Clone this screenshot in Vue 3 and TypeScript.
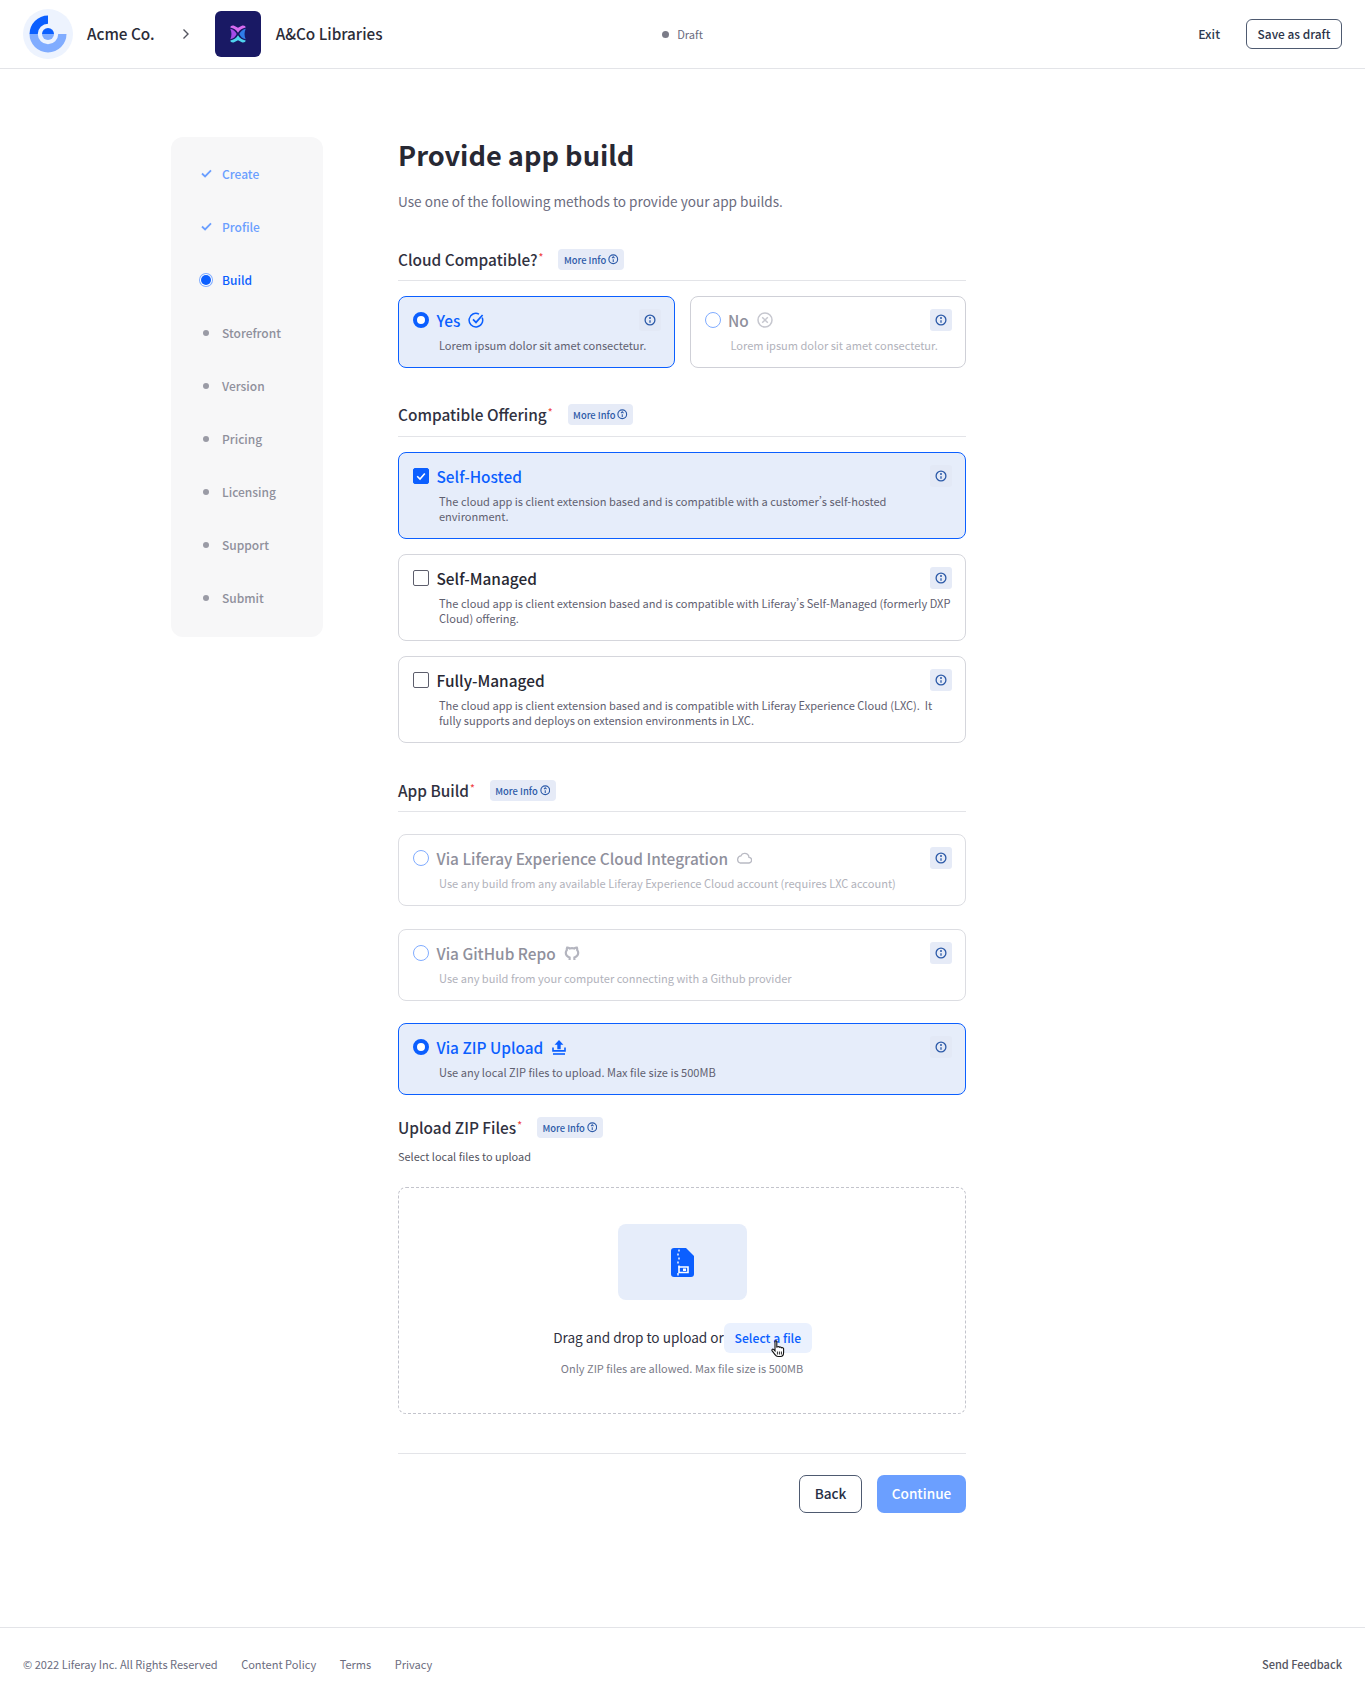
<script setup lang="ts">
interface Step { label: string; state: 'done' | 'current' | 'todo' }
const steps: Step[] = [
  { label: 'Create', state: 'done' },
  { label: 'Profile', state: 'done' },
  { label: 'Build', state: 'current' },
  { label: 'Storefront', state: 'todo' },
  { label: 'Version', state: 'todo' },
  { label: 'Pricing', state: 'todo' },
  { label: 'Licensing', state: 'todo' },
  { label: 'Support', state: 'todo' },
  { label: 'Submit', state: 'todo' },
]
const offerings = [
  { title: 'Self-Hosted', desc: 'The cloud app is client extension based and is compatible with a customer’s self-hosted environment.', on: true },
  { title: 'Self-Managed', desc: 'The cloud app is client extension based and is compatible with Liferay’s Self-Managed (formerly DXP Cloud) offering.', on: false },
  { title: 'Fully-Managed', desc: 'The cloud app is client extension based and is compatible with Liferay Experience Cloud (LXC). \u00a0It fully supports and deploys on extension environments in LXC.', on: false },
]
</script>

<template>
  <div class="page">
    <header class="topbar">
      <div class="crumbs">
        <svg class="logo" viewBox="0 0 50 50" width="50" height="50">
          <circle cx="25" cy="25" r="25" fill="#edf3fe" />
          <path d="M6.5 25A18.5 18.5 0 0 0 43.5 25L35.2 25A10.2 10.2 0 0 1 14.8 25Z" fill="#80acff" />
          <path d="M6.5 25A18.5 18.5 0 0 1 25 6.5L25 14.8A10.2 10.2 0 0 0 14.8 25Z" fill="#0b5fff" />
          <path d="M19 25A6 6 0 0 1 31 25Z" fill="#0b5fff" />
          <path d="M19 25A6 6 0 0 0 31 25Z" fill="#80acff" />
        </svg>
        <span class="crumb-name acme">Acme Co.</span>
        <svg class="chev" viewBox="0 0 8 12" width="8" height="12"><path d="M1.5 1.5 6 6l-4.5 4.5" fill="none" stroke="#54555f" stroke-width="1.4" /></svg>
        <span class="app-icon">
          <svg viewBox="0 0 20 20" width="22" height="22">
            <path d="M3 4C3 2.600 4.800 1.800 6.500 2.400L10 4.400l3.500-2C15.200 1.800 17 2.600 17 4 14 4.600 11.500 6.200 10 8.800 8.500 6.200 6 4.600 3 4Z" fill="#d76bf0" />
            <path d="M3 5.200C5.800 5.800 7.800 7.600 8.800 10 7.800 12.400 5.800 14.200 3 14.800 4.400 11.600 4.400 8.400 3 5.200Z" fill="#a54be8" />
            <path d="M17 5.200C14.200 5.800 12.200 7.600 11.200 10c1 2.400 3 4.200 5.800 4.800C15.600 11.600 15.600 8.400 17 5.200Z" fill="#2f7de8" />
            <path d="M3 16C6 15.400 8.500 13.800 10 11.200c1.500 2.600 4 4.200 7 4.800 0 1.400-1.800 2.200-3.500 1.600L10 15.600l-3.500 2C4.800 18.200 3 17.400 3 16Z" fill="#4fd3ee" />
          </svg>
        </span>
        <span class="crumb-name">A&amp;Co Libraries</span>
      </div>
      <div class="status"><i class="status-dot"></i>Draft</div>
      <div class="actions">
        <span class="exit">Exit</span>
        <button class="btn-draft">Save as draft</button>
      </div>
    </header>

    <div class="body">
      <nav class="steps">
        <div v-for="s in steps" :key="s.label" class="step" :class="s.state">
          <span class="step-mark">
            <svg v-if="s.state === 'done'" viewBox="0 0 12 10" width="11" height="9"><path d="M1 5l3.400 3.200L11 1.400" fill="none" stroke="currentColor" stroke-width="2" /></svg>
            <i v-else-if="s.state === 'current'" class="mark-current"></i>
            <i v-else class="mark-todo"></i>
          </span>
          <span>{{ s.label }}</span>
        </div>
      </nav>

      <main class="content">
        <h1 class="title">Provide app build</h1>
        <p class="lead">Use one of the following methods to provide your app builds.</p>

        <section class="sec sec-first">
          <div class="sec-head ruled">
            <h2>Cloud Compatible?<sup>*</sup></h2>
            <span class="more">More Info<svg viewBox="0 0 12 12" width="10.500" height="10.500"><circle cx="6" cy="6" r="5" fill="none" stroke="currentColor" stroke-width="1.300" /><path d="M6 9V6M4.600 4.800 6 3.300l1.400 1.500" fill="none" stroke="currentColor" stroke-width="1.200" /></svg></span>
          </div>
          <div class="two">
            <div class="card on short">
              <div class="card-top">
                <i class="radio checked"></i>
                <span class="card-title">Yes</span>
                <svg class="t-icon" viewBox="0 0 16 16" width="16" height="16"><path d="M14.200 5.600A6.800 6.800 0 1 1 11 2.100" fill="none" stroke="#0b5fff" stroke-width="1.500" /><path d="M5 7.400 8 10.400 14.600 3" fill="none" stroke="#0b5fff" stroke-width="1.700" /></svg>
                <span class="info"><svg viewBox="0 0 12 12" width="12" height="12"><circle cx="6" cy="6" r="4.900" fill="none" stroke="currentColor" stroke-width="1.300" /><path d="M6 8.800V6.200" stroke="currentColor" stroke-width="1.300" /><circle cx="6" cy="4" r="1" fill="currentColor" /></svg></span>
              </div>
              <p class="card-desc">Lorem ipsum dolor sit amet consectetur.</p>
            </div>
            <div class="card off dim short">
              <div class="card-top">
                <i class="radio"></i>
                <span class="card-title">No</span>
                <svg class="t-icon" viewBox="0 0 16 16" width="16" height="16"><circle cx="8" cy="8" r="7" fill="none" stroke="#c6c7cf" stroke-width="1.500" /><path d="M5.200 5.200l5.600 5.600M10.800 5.200l-5.600 5.600" stroke="#c6c7cf" stroke-width="1.500" /></svg>
                <span class="info"><svg viewBox="0 0 12 12" width="12" height="12"><circle cx="6" cy="6" r="4.900" fill="none" stroke="currentColor" stroke-width="1.300" /><path d="M6 8.800V6.200" stroke="currentColor" stroke-width="1.300" /><circle cx="6" cy="4" r="1" fill="currentColor" /></svg></span>
              </div>
              <p class="card-desc">Lorem ipsum dolor sit amet consectetur.</p>
            </div>
          </div>
        </section>

        <section class="sec sec-offering">
          <div class="sec-head ruled">
            <h2>Compatible Offering<sup>*</sup></h2>
            <span class="more">More Info<svg viewBox="0 0 12 12" width="10.500" height="10.500"><circle cx="6" cy="6" r="5" fill="none" stroke="currentColor" stroke-width="1.300" /><path d="M6 9V6M4.600 4.800 6 3.300l1.400 1.500" fill="none" stroke="currentColor" stroke-width="1.200" /></svg></span>
          </div>
          <div class="stack">
            <div v-for="o in offerings" :key="o.title" class="card tall" :class="o.on ? 'on' : 'plain'">
              <div class="card-top">
                <i class="check" :class="{ checked: o.on }">
                  <svg v-if="o.on" viewBox="0 0 12 12" width="12" height="12"><path d="M2.200 6.200 5 9l4.800-5.600" fill="none" stroke="#fff" stroke-width="1.600" /></svg>
                </i>
                <span class="card-title">{{ o.title }}</span>
                <span class="info"><svg viewBox="0 0 12 12" width="12" height="12"><circle cx="6" cy="6" r="4.900" fill="none" stroke="currentColor" stroke-width="1.300" /><path d="M6 8.800V6.200" stroke="currentColor" stroke-width="1.300" /><circle cx="6" cy="4" r="1" fill="currentColor" /></svg></span>
              </div>
              <p class="card-desc">{{ o.desc }}</p>
            </div>
          </div>
        </section>

        <section class="sec sec-build">
          <div class="sec-head ruled">
            <h2>App Build<sup>*</sup></h2>
            <span class="more">More Info<svg viewBox="0 0 12 12" width="10.500" height="10.500"><circle cx="6" cy="6" r="5" fill="none" stroke="currentColor" stroke-width="1.300" /><path d="M6 9V6M4.600 4.800 6 3.300l1.400 1.500" fill="none" stroke="currentColor" stroke-width="1.200" /></svg></span>
          </div>
          <div class="stack builds">
            <div class="card off short">
              <div class="card-top">
                <i class="radio"></i>
                <span class="card-title">Via Liferay Experience Cloud Integration</span>
                <svg class="t-icon" viewBox="0 0 16 12" width="16" height="12"><path d="M4.200 11H12.600A2.800 2.800 0 0 0 13 5.400 4.200 4.200 0 0 0 8.200 1.400 4 4 0 0 0 5 3.800 3.700 3.700 0 0 0 4.200 11Z" fill="none" stroke="#b9bac3" stroke-width="1.300" /></svg>
                <span class="info"><svg viewBox="0 0 12 12" width="12" height="12"><circle cx="6" cy="6" r="4.900" fill="none" stroke="currentColor" stroke-width="1.300" /><path d="M6 8.800V6.200" stroke="currentColor" stroke-width="1.300" /><circle cx="6" cy="4" r="1" fill="currentColor" /></svg></span>
              </div>
              <p class="card-desc">Use any build from any available Liferay Experience Cloud account (requires LXC account)</p>
            </div>
            <div class="card off short">
              <div class="card-top">
                <i class="radio"></i>
                <span class="card-title">Via GitHub Repo</span>
                <svg class="t-icon" viewBox="0 0 16 16" width="16" height="16"><path d="M5.600 15v-2.400C4 12 1.800 10.800 1.800 7.800c0-1.100.4-2 1-2.700-.1-.9 0-1.700.4-2.600.9 0 1.800.4 2.600 1a7.500 7.500 0 0 1 4.400 0c.8-.6 1.700-1 2.600-1 .4.900.5 1.700.4 2.600.6.700 1 1.600 1 2.700 0 3-2.200 4.200-3.800 4.800V15" fill="none" stroke="#b4b5bf" stroke-width="2.200" /></svg>
                <span class="info"><svg viewBox="0 0 12 12" width="12" height="12"><circle cx="6" cy="6" r="4.900" fill="none" stroke="currentColor" stroke-width="1.300" /><path d="M6 8.800V6.200" stroke="currentColor" stroke-width="1.300" /><circle cx="6" cy="4" r="1" fill="currentColor" /></svg></span>
              </div>
              <p class="card-desc">Use any build from your computer connecting with a Github provider</p>
            </div>
            <div class="card on short">
              <div class="card-top">
                <i class="radio checked"></i>
                <span class="card-title">Via ZIP Upload</span>
                <svg class="t-icon up" viewBox="0 0 14 16" width="14" height="16"><path d="M7 1 11.400 5.800H8.700V10.200H5.300V5.800H2.600Z" fill="#0b5fff" /><path d="M1 8.500v3.400h12V8.500" fill="none" stroke="#0b5fff" stroke-width="1.600" /><path d="M1 15h12" stroke="#0b5fff" stroke-width="1.600" /></svg>
                <span class="info"><svg viewBox="0 0 12 12" width="12" height="12"><circle cx="6" cy="6" r="4.900" fill="none" stroke="currentColor" stroke-width="1.300" /><path d="M6 8.800V6.200" stroke="currentColor" stroke-width="1.300" /><circle cx="6" cy="4" r="1" fill="currentColor" /></svg></span>
              </div>
              <p class="card-desc">Use any local ZIP files to upload. Max file size is 500MB</p>
            </div>
          </div>
        </section>

        <section class="sec sec-upload">
          <div class="sec-head">
            <h2>Upload ZIP Files<sup>*</sup></h2>
            <span class="more">More Info<svg viewBox="0 0 12 12" width="10.500" height="10.500"><circle cx="6" cy="6" r="5" fill="none" stroke="currentColor" stroke-width="1.300" /><path d="M6 9V6M4.600 4.800 6 3.300l1.400 1.500" fill="none" stroke="currentColor" stroke-width="1.200" /></svg></span>
          </div>
          <p class="upload-hint">Select local files to upload</p>
          <div class="drop">
            <div class="drop-icon">
              <svg viewBox="0 0 23 29" width="23" height="29">
                <path d="M3 0H15L23 8V26A3 3 0 0 1 20 29H3A3 3 0 0 1 0 26V3A3 3 0 0 1 3 0Z" fill="#0b5fff" />
                <path d="M8 1.500V3.500M7 5.500V7.500M8 9.500V11.500M7 13.500V15.500M8 17.500V19.500M7 25V27.500" stroke="#fff" stroke-width="1.400" />
                <path d="M8 19H17V24.500H8Z" fill="none" stroke="#fff" stroke-width="1.600" />
                <rect x="12" y="20.500" width="3" height="2.500" fill="#fff" />
              </svg>
            </div>
            <div class="drop-line">
              <span class="drop-text">Drag and drop to upload or</span>
              <span class="select-file">Select a file
                <svg class="cursor" viewBox="0 0 16 18" width="16" height="18">
                  <path d="M5 1.500C5 .6 6.800 .6 6.800 1.500V7L8 6.700C9 6.500 9.400 6.700 9.600 7.300 10.400 6.900 11.200 7 11.400 7.800 12.200 7.400 13.400 7.600 13.600 8.600V12.500C13.600 14.600 12.400 16.500 10.400 16.500H8C6.600 16.500 5.800 15.800 5 14.600L2 10.600C1.400 9.600 2.600 8.600 3.600 9.400L5 10.800Z" fill="#fff" stroke="#111" stroke-width="1.100" />
                  <path d="M7.400 11.500V14.500M9.400 11.500V14.500M11.400 11.500V14.500" stroke="#111" stroke-width=".9" />
                </svg>
              </span>
            </div>
            <p class="drop-note">Only ZIP files are allowed. Max file size is 500MB</p>
          </div>
        </section>

        <div class="form-actions">
          <button class="btn-back">Back</button>
          <button class="btn-continue">Continue</button>
        </div>
      </main>
    </div>

    <footer class="footer">
      <div class="foot-left">
        <span>© 2022 Liferay Inc. All Rights Reserved</span>
        <span>Content Policy</span>
        <span>Terms</span>
        <span>Privacy</span>
      </div>
      <span class="foot-right">Send Feedback</span>
    </footer>
  </div>
</template>

<style>
html, body { margin: 0; background: #fff; }
</style>

<style scoped>
.page {
  height: 1702px;
  display: flex;
  flex-direction: column;
  font-family: "Noto Sans CJK SC", "Noto Sans", sans-serif;
  font-variant-east-asian: proportional-width;
  color: #272833;
  overflow: hidden;
}
p, h1, h2 { margin: 0; font-weight: inherit; }
i { display: block; font-style: normal; }
button { font-family: inherit; font-variant-east-asian: inherit; cursor: pointer; }

.topbar {
  height: 68px;
  border-bottom: 1px solid #e3e4e8;
  padding: 0 23px;
  display: grid;
  grid-template-columns: 1fr auto 1fr;
  align-items: center;
  flex: none;
}
.crumbs { display: flex; align-items: center; }
.crumb-name { font-size: 15.300px; font-weight: 500; line-height: 24px; padding-bottom: 2px; color: #2b2c38; }
.acme { margin-left: 14px; }
.chev { margin: 0 25px 0 27px; }
.app-icon {
  width: 46px; height: 46px;
  border-radius: 6px;
  background: #191964;
  display: flex; align-items: center; justify-content: center;
  margin-right: 15px;
}
.status { display: flex; align-items: center; gap: 8px; font-size: 11.100px; line-height: 18px; color: #6b6c7e; }
.status-dot { width: 7px; height: 7px; border-radius: 50%; background: #7b7c88; }
.actions { display: flex; align-items: center; justify-content: flex-end; gap: 26px; }
.exit { font-size: 12.300px; line-height: 18px; font-weight: 500; color: #2e3a52; }
.btn-draft {
  width: 96px; height: 30px;
  border: 1.500px solid #4e5a70;
  border-radius: 6px;
  background: #fff;
  padding: 0 0 2px;
  font-size: 11.900px;
  font-weight: 500;
  color: #2b3348;
}

.body { display: flex; flex: none; padding-left: 171px; }
.steps {
  width: 152px;
  height: 500px;
  box-sizing: border-box;
  margin-top: 68px;
  padding: 10px 0 13px;
  border-radius: 12px;
  background: #f7f7f8;
}
.step {
  height: 53px;
  padding-left: 27px;
  display: flex;
  align-items: center;
  font-size: 12px;
  font-weight: 500;
  color: #8f909c;
}
.step.done { color: #6b9fff; }
.step.current { color: #0b5fff; }
.step-mark { width: 16px; margin-right: 8px; display: flex; align-items: center; justify-content: center; }
.mark-todo { width: 6px; height: 6px; border-radius: 50%; background: #9a9ba5; }
.mark-current {
  width: 10px; height: 10px; border-radius: 50%;
  background: #0b5fff;
  box-shadow: 0 0 0 1px #fff, 0 0 0 2px #80acff;
}

.content { width: 568px; margin-left: 75px; padding-top: 66px; }
.title { font-size: 27.200px; line-height: 38px; font-weight: 700; color: #272833; }
.lead { margin-top: 16px; font-size: 13.600px; line-height: 24px; color: #6b6c7e; }

.sec-first { margin-top: 36px; }
.sec-offering { margin-top: 36px; }
.sec-offering .sec-head.ruled { padding-bottom: 10px; }
.sec-build { margin-top: 37.500px; }
.sec-upload { margin-top: 22px; }
.sec-head { display: flex; align-items: center; height: 22px; }
.sec-head.ruled { box-sizing: content-box; padding-bottom: 9px; border-bottom: 1px solid #e3e4e8; }
.sec-head h2 { font-size: 15.400px; line-height: 20px; padding-bottom: 2px; font-weight: 500; color: #30313f; }
.sec-head sup { font-size: 10px; line-height: 0; color: #f04848; vertical-align: 5px; margin-left: 1px; }
.more {
  margin: 0 0 1px 15px;
  height: 21px;
  display: inline-flex;
  align-items: center;
  gap: 2px;
  padding: 0 5.500px;
  border-radius: 4px;
  background: #e6ebf7;
  color: #2c5aa8;
  font-size: 9.400px;
  font-weight: 500;
}

.two { display: grid; grid-template-columns: 1fr 1fr; gap: 15px; margin-top: 15px; }
.stack { display: flex; flex-direction: column; gap: 15px; margin-top: 14.500px; }
.builds { gap: 22.500px; margin-top: 22px; }

.card {
  box-sizing: border-box;
  border: 1.500px solid #d5d6dc;
  border-radius: 8px;
  background: #fff;
  padding: 12px 13px 0 14px;
}
.card.short { height: 72px; }
.card.tall { height: 87px; }
.card.on { border-color: #0b5fff; background: #e6edfa; }
.card.off { border-color: #dcdde2; }
.card.dim { border-color: #cfd0d7; }
.card-top { display: flex; align-items: center; height: 22px; }
.card-title { margin-left: 7.500px; font-size: 15.400px; line-height: 22px; font-weight: 500; }
.on .card-title { color: #0b5fff; }
.plain .card-title { color: #272833; }
.off .card-title { color: #8f909c; }
.t-icon { margin-left: 8px; }
.t-icon.up { margin-left: 9px; }
.info {
  margin-left: auto;
  width: 22px; height: 22px;
  border-radius: 3px;
  background: #e6ebf7;
  color: #2c5aa8;
  display: flex; align-items: center; justify-content: center;
}
.on .info { background: #e3e9f6; }
.card-desc { margin: 7px 0 0 26px; font-size: 11.050px; line-height: 15px; color: #5f6070; }
.off .card-desc { color: #b1b2bb; }

.radio {
  width: 16px; height: 16px; box-sizing: border-box; flex: none;
  border-radius: 50%;
  border: 1.500px solid #80acff;
  background: #fff;
}
.radio.checked { border: 4.500px solid #0b5fff; }
.check {
  width: 16px; height: 16px; box-sizing: border-box; flex: none;
  border: 1.500px solid #5d5e6c;
  border-radius: 2px;
  background: #fff;
  display: flex; align-items: center; justify-content: center;
}
.check.checked { background: #0b5fff; border-color: #0b5fff; }

.upload-hint { margin-top: 8px; font-size: 10.950px; line-height: 18px; color: #54555f; }
.drop {
  box-sizing: border-box;
  margin-top: 22px;
  height: 227px;
  padding-top: 36px;
  border: 1.500px dashed #c3c4cc;
  border-radius: 8px;
  display: flex;
  flex-direction: column;
  align-items: center;
}
.drop-icon {
  width: 129px; height: 76px;
  border-radius: 8px;
  background: #e6edfa;
  display: flex; align-items: center; justify-content: center;
  flex: none;
}
.drop-line { margin: 23px 0 0 1px; display: flex; align-items: center; font-size: 13.600px; line-height: 24px; color: #30313f; }
.drop-text { padding-bottom: 3px; }
.select-file {
  position: relative;
  height: 30px;
  width: 88px;
  display: flex; align-items: center; justify-content: center;
  border-radius: 6px;
  background: #eaf1fe;
  color: #0b5fff;
  font-size: 12.200px;
  font-weight: 500;
}
.cursor { position: absolute; left: 46px; top: 17px; }
.drop-note { margin-top: 6px; font-size: 11px; line-height: 18px; color: #7a7b88; }

.form-actions {
  margin-top: 39px;
  padding-top: 21px;
  border-top: 1px solid #e3e4e8;
  display: flex;
  justify-content: flex-end;
  gap: 15px;
}
.btn-back, .btn-continue {
  height: 38px;
  border-radius: 7px;
  padding: 0 0 2px;
  font-size: 13.600px;
  font-weight: 500;
}
.btn-back { width: 63px; background: #fff; border: 1.500px solid #4e5a70; color: #272f45; }
.btn-continue { width: 89px; background: #6b9fff; border: none; color: #fff; }

.footer {
  margin-top: auto;
  height: 75px;
  box-sizing: border-box;
  flex: none;
  border-top: 1px solid #e3e4e8;
  padding: 0 23px 3px;
  display: flex;
  align-items: center;
  justify-content: space-between;
  font-size: 11.050px;
  line-height: 18px;
  color: #6b6c7e;
}
.foot-left { display: flex; gap: 23.500px; }
.foot-right { font-weight: 500; color: #54555f; }
</style>
